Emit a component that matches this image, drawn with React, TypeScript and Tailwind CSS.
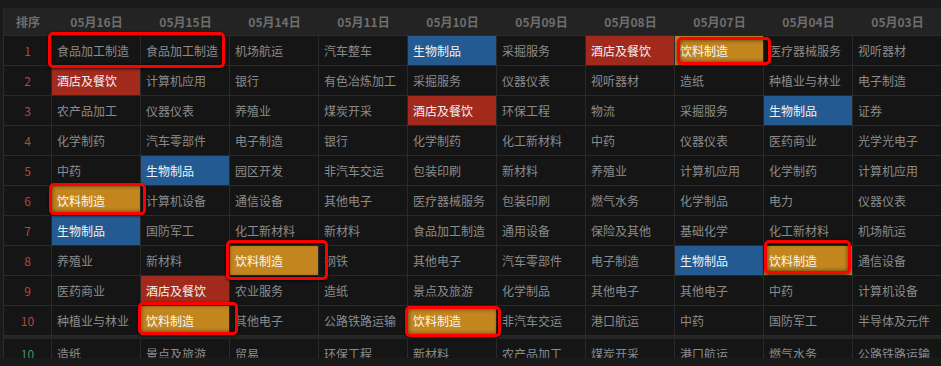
import React from 'react'

type Tone = 'red' | 'blue' | 'gold' | undefined

const dates = ['05月16日', '05月15日', '05月14日', '05月11日', '05月10日', '05月09日', '05月08日', '05月07日', '05月04日', '05月03日']

// r: 酒店及餐饮, b: 生物制品, g: 饮料制造
const rows: string[][] = [
  ['食品加工制造', '食品加工制造', '机场航运', '汽车整车', '生物制品', '采掘服务', '酒店及餐饮', '饮料制造', '医疗器械服务', '视听器材'],
  ['酒店及餐饮', '计算机应用', '银行', '有色冶炼加工', '采掘服务', '仪器仪表', '视听器材', '造纸', '种植业与林业', '电子制造'],
  ['农产品加工', '仪器仪表', '养殖业', '煤炭开采', '酒店及餐饮', '环保工程', '物流', '采掘服务', '生物制品', '证券'],
  ['化学制药', '汽车零部件', '电子制造', '银行', '化学制药', '化工新材料', '中药', '仪器仪表', '医药商业', '光学光电子'],
  ['中药', '生物制品', '园区开发', '非汽车交运', '包装印刷', '新材料', '养殖业', '计算机应用', '化学制药', '计算机应用'],
  ['饮料制造', '计算机设备', '通信设备', '其他电子', '医疗器械服务', '包装印刷', '燃气水务', '化学制品', '电力', '仪器仪表'],
  ['生物制品', '国防军工', '化工新材料', '新材料', '食品加工制造', '通用设备', '保险及其他', '基础化学', '化工新材料', '机场航运'],
  ['养殖业', '新材料', '饮料制造', '钢铁', '其他电子', '汽车零部件', '电子制造', '生物制品', '饮料制造', '通信设备'],
  ['医药商业', '酒店及餐饮', '农业服务', '造纸', '景点及旅游', '化学制品', '其他电子', '其他电子', '中药', '计算机设备'],
  ['种植业与林业', '饮料制造', '其他电子', '公路铁路运输', '饮料制造', '非汽车交运', '港口航运', '中药', '国防军工', '半导体及元件'],
]

const extraRow = ['造纸', '景点及旅游', '贸易', '环保工程', '新材料', '农产品加工', '煤炭开采', '港口航运', '燃气水务', '公路铁路运输']

// 哪些格子需要上色 [row, col, tone]
const tones: Record<string, Tone> = {
  '0-4': 'blue', '0-6': 'red', '0-7': 'gold',
  '1-0': 'red',
  '2-4': 'red', '2-8': 'blue',
  '4-1': 'blue',
  '5-0': 'gold',
  '6-0': 'blue',
  '7-2': 'gold', '7-7': 'blue', '7-8': 'gold',
  '8-1': 'red',
  '9-1': 'gold', '9-4': 'gold',
}

const toneClass = (t: Tone) => {
  if (t === 'red') return 'bg-[#a22a1c] text-[#f2f2f2]'
  if (t === 'blue') return 'bg-[#245a92] text-[#f2f2f2]'
  if (t === 'gold') return 'bg-[#c3861f] text-[#f7f7f7]'
  return 'text-[#8b8b8b]'
}

// 紅框標註 (畫在表格上方)
const marks = [
  'left-[44px] top-[24px] w-[177px] h-[36px]',
  'left-[673px] top-[29px] w-[94px] h-[28px]',
  'left-[45px] top-[175px] w-[97px] h-[32px]',
  'left-[222px] top-[232px] w-[102px] h-[40px]',
  'left-[760px] top-[232px] w-[87px] h-[34px]',
  'left-[134px] top-[294px] w-[100px] h-[33px]',
  'left-[401px] top-[298px] w-[96px] h-[31px]',
]

export default function App() {
  return (
    <div
      className="w-[941px] h-[366px] bg-[#1a1a1a] pt-[8px] pl-[3px] overflow-hidden"
      style={{ fontFamily: '"Noto Sans CJK SC", "Noto Sans", sans-serif' }}
    >
      <div className="relative h-[350px] overflow-hidden border-l border-[#2a2a2a] bg-[#151515]">
        {/* 表頭 */}
        <div className="grid grid-cols-[48px_repeat(10,89px)] h-[28px] bg-[#232323] border-b border-[#2a2a2a] text-[12px] font-bold text-[#6e6e6e]">
          <div className="flex items-center justify-center">排序</div>
          {dates.map((d) => (
            <div key={d} className="flex items-center justify-center">{d}</div>
          ))}
        </div>

        {rows.map((row, i) => (
          <div key={i} className="grid grid-cols-[48px_repeat(10,89px)] h-[30px] border-b border-[#2a2a2a] text-[12px]">
            <div className="flex items-center justify-center border-r border-[#2a2a2a] text-[#b8463a]">{i + 1}</div>
            {row.map((name, j) => (
              <div
                key={j}
                className={`flex items-center pl-[5px] border-r border-[#2a2a2a] whitespace-nowrap ${toneClass(tones[`${i}-${j}`])}`}
              >
                {name}
              </div>
            ))}
          </div>
        ))}

        <div className="h-[3px] bg-[#262626]" />

        <div className="grid grid-cols-[48px_repeat(10,89px)] h-[30px] text-[12px]">
          <div className="flex items-center justify-center border-r border-[#2a2a2a] text-[#3f9a5c]">10</div>
          {extraRow.map((name, j) => (
            <div key={j} className="flex items-center pl-[5px] border-r border-[#2a2a2a] whitespace-nowrap text-[#8b8b8b]">
              {name}
            </div>
          ))}
        </div>

        {marks.map((m, k) => (
          <div
            key={k}
            className={`absolute ${m} border-[3px] border-[#ff0000] rounded-[5px] shadow-[0_1px_3px_rgba(0,0,0,0.7),inset_0_0_4px_rgba(0,0,0,0.6)] pointer-events-none`}
          />
        ))}
      </div>
    </div>
  )
}
